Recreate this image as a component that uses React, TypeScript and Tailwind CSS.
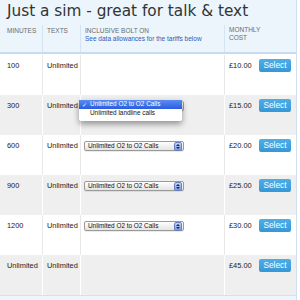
const tariffs = [
  { minutes: "100", price: "£10.00", bolt: "none" },
  { minutes: "300", price: "£15.00", bolt: "open" },
  { minutes: "600", price: "£20.00", bolt: "select" },
  { minutes: "900", price: "£25.00", bolt: "select" },
  { minutes: "1200", price: "£30.00", bolt: "select" },
  { minutes: "Unlimited", price: "£45.00", bolt: "none" },
];

function Stepper() {
  return (
    <span className="flex h-[9px] w-[8px] flex-col items-center justify-center gap-[1px] rounded-[2px] border border-[#6a7fbf] bg-gradient-to-b from-[#c3d3f6] to-[#7c98e2]">
      <svg width="4" height="2" viewBox="0 0 4 2">
        <path d="M0 2 L2 0 L4 2 Z" fill="#1d2a50" />
      </svg>
      <svg width="4" height="2" viewBox="0 0 4 2">
        <path d="M0 0 L2 2 L4 0 Z" fill="#1d2a50" />
      </svg>
    </span>
  );
}

function BoltSelect({ label = true }: { label?: boolean }) {
  return (
    <div className="flex h-[10px] w-[100px] items-center justify-between rounded-[2px] border border-[#9a9a9a] bg-gradient-to-b from-white to-[#e4e4e4] pl-[3px] pr-[1px] shadow-[0_1px_0_rgba(0,0,0,0.08)]">
      <span className="text-[6.4px] leading-none text-[#111]">{label ? "Unlimited O2 to O2 Calls" : ""}</span>
      <Stepper />
    </div>
  );
}

function OpenMenu() {
  // the popup covers the closed select, only its stepper peeks out on the right
  return (
    <div className="relative">
      <BoltSelect label={false} />
      <div className="absolute left-[-5px] top-[-1px] w-[103px] rounded-[2px] bg-white pb-[3px] shadow-[0_3px_6px_rgba(0,0,0,0.4)]">
        <div className="flex h-[9px] items-center gap-[3px] bg-gradient-to-b from-[#5b8cf2] to-[#2b5be0] pl-[3px] text-[6.4px] leading-none text-white">
          <span className="font-['DejaVu_Sans',sans-serif] text-[6px]">✓</span>
          <span>Unlimited O2 to O2 Calls</span>
        </div>
        <div className="flex h-[9px] items-center pl-[11px] text-[6.4px] leading-none text-[#111]">
          Unlimited landline calls
        </div>
      </div>
    </div>
  );
}

export default function App() {
  return (
    <div className="h-[300px] w-[300px] overflow-hidden bg-white font-['Liberation_Sans',Arial,sans-serif] text-[#222]">
      <div className="w-[297px] border-r border-[#cfe0f0]">
        {/* Heading + column titles */}
        <div className="border-b-2 border-[#c7dcef] bg-[#ecf4fc]">
          <div className="h-[25px] pl-[7px] pt-[2px] font-['DejaVu_Sans',sans-serif] text-[15.3px] leading-[19px] text-[#333]">
            Just a sim - great for talk &amp; text
          </div>
          <div className="grid h-[27px] grid-cols-[42px_38px_144px_72px] text-[6.5px] uppercase leading-[8px] text-[#6b6b6b]">
            <div className="pl-[7px] pt-[2px]">Minutes</div>
            <div className="border-l border-[#d4e4f2] pl-[4px] pt-[2px]">Texts</div>
            <div className="border-l border-[#d4e4f2] pl-[4px] pt-[2px]">
              <div>Inclusive bolt on</div>
              <div className="normal-case text-[#2b5fb5]">See data allowances for the tariffs below</div>
            </div>
            <div className="border-l border-[#d4e4f2] pl-[4px] pt-[1px]">
              <div>Monthly</div>
              <div>Cost</div>
            </div>
          </div>
        </div>

        {/* Tariff rows */}
        {tariffs.map((t, i) => {
          const grey = i % 2 === 1;
          const line = grey ? "border-white" : "border-[#e8e8e8]";
          return (
            <div
              key={t.minutes}
              className={`grid grid-cols-[42px_38px_144px_72px] text-[7.4px] leading-[10px] ${grey ? "bg-[#efefef]" : "bg-white"} ${i === 0 ? "h-[41px] pt-[1px]" : "h-[40px]"}`}
            >
              <div className="pl-[7px] pt-[6px]">{t.minutes}</div>
              <div className={`border-l pl-[4px] pt-[6px] ${line}`}>Unlimited</div>
              <div className={`relative z-10 border-l pl-[3px] pt-[6px] ${line}`}>
                {t.bolt === "select" && <BoltSelect />}
                {t.bolt === "open" && <OpenMenu />}
              </div>
              <div className={`flex items-start border-l pl-[4px] pt-[4px] ${line}`}>
                <span className="pt-[2px]">{t.price}</span>
                <button className="ml-auto mr-[5px] h-[13px] w-[32px] rounded-[2px] bg-gradient-to-b from-[#4eaee6] to-[#3597d6] text-[8.3px] leading-[13px] text-white">
                  Select
                </button>
              </div>
            </div>
          );
        })}

        {/* Footer strip */}
        <div className="h-[10px] border-t border-[#cfe3f3] bg-[#eef6fd]" />
      </div>
    </div>
  );
}
